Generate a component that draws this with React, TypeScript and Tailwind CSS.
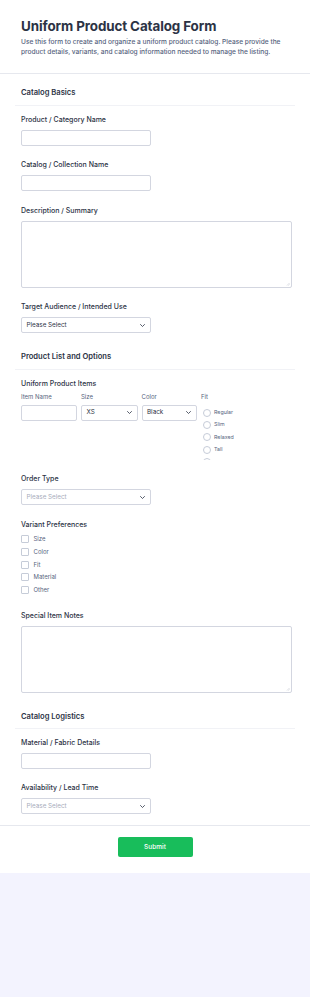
import { ReactNode } from 'react';

function Chevron() {
    return (
        <svg width="5" height="3" viewBox="0 0 10 6" className="shrink-0">
            <path d="M1 1l4 4 4-4" fill="none" stroke="#2c3345" strokeWidth="1.6" strokeLinecap="round" strokeLinejoin="round" />
        </svg>
    );
}

function Label({ children }: { children: ReactNode }) {
    return <div className="h-[10px] text-[7px] leading-[10px] font-medium text-[#2c3345]">{children}</div>;
}

function TextInput({ className = 'w-[130px]' }: { className?: string }) {
    return <div className={`h-[16px] rounded-[2px] border border-[#d3d6e0] bg-white ${className}`}></div>;
}

function Select({ value, placeholder = false, className = 'w-[130px]' }: { value: string; placeholder?: boolean; className?: string }) {
    return (
        <div className={`h-[16px] rounded-[2px] border border-[#d3d6e0] bg-white flex items-center justify-between pl-[4.5px] pr-[5px] ${className}`}>
            <span className={`text-[6.3px] leading-none ${placeholder ? 'text-[#a7adbb]' : 'text-[#2c3345]'}`}>{value}</span>
            <Chevron />
        </div>
    );
}

function TextArea({ height }: { height: string }) {
    return (
        <div className={`relative w-full rounded-[2px] border border-[#d3d6e0] bg-white ${height}`}>
            <svg width="4" height="4" viewBox="0 0 8 8" className="absolute right-[1px] bottom-[1px]">
                <path d="M7 2L2 7M7 5L5 7" stroke="#b5bac6" strokeWidth="1" />
            </svg>
        </div>
    );
}

function SectionHeader({ title }: { title: string }) {
    return (
        <div className="border-b border-[#f1f2f6] pb-[6.5px] px-[6px]">
            <div className="h-[10px] text-[7.6px] leading-[10px] font-semibold text-[#2c3345]">{title}</div>
        </div>
    );
}

const fits = ['Regular', 'Slim', 'Relaxed', 'Tall'];
const variants = ['Size', 'Color', 'Fit', 'Material', 'Other'];

export default function App() {
    return (
        <div className="min-h-screen bg-[#f3f3fe]" style={{ fontFamily: 'Inter, "Noto Sans", sans-serif' }}>
            <div className="bg-white pb-[16px]">
                {/* header */}
                <div className="px-[21px] pt-[18px] pb-[16.5px] border-b border-[#e6e8ee]">
                    <h1 className="text-[13.4px] leading-[16px] font-bold text-[#2c3345] tracking-[-0.1px]">Uniform Product Catalog Form</h1>
                    <p className="mt-[2.5px] text-[6.6px] leading-[10px] text-[#57647e] font-medium">
                        Use this form to create and organize a uniform product catalog. Please provide the
                        <br />
                        product details, variants, and catalog information needed to manage the listing.
                    </p>
                </div>

                <div className="px-[15px]">
                    {/* Catalog Basics */}
                    <div className="pt-[14px]">
                        <SectionHeader title="Catalog Basics" />
                        <div className="pl-[6px] pr-[3px] pt-[9px] flex flex-col gap-[14.5px]">
                            <div className="flex flex-col gap-[5px]">
                                <Label>Product / Category Name</Label>
                                <TextInput />
                            </div>
                            <div className="flex flex-col gap-[5px]">
                                <Label>Catalog / Collection Name</Label>
                                <TextInput />
                            </div>
                            <div className="flex flex-col gap-[5px]">
                                <Label>Description / Summary</Label>
                                <TextArea height="h-[67px]" />
                            </div>
                            <div className="flex flex-col gap-[5px]">
                                <Label>Target Audience / Intended Use</Label>
                                <Select value="Please Select" />
                            </div>
                        </div>
                    </div>

                    {/* Product List and Options */}
                    <div className="pt-[19px]">
                        <SectionHeader title="Product List and Options" />
                        <div className="pl-[6px] pr-[3px] pt-[9px] flex flex-col gap-[14.5px]">
                            <div>
                                <Label>Uniform Product Items</Label>
                                <div className="mt-[3px] grid grid-cols-[56px_56.5px_55.5px_1fr] gap-x-[4px]">
                                    <div className="h-[10px] text-[6px] leading-[10px] text-[#57647e]">Item Name</div>
                                    <div className="h-[10px] text-[6px] leading-[10px] text-[#57647e]">Size</div>
                                    <div className="h-[10px] text-[6px] leading-[10px] text-[#57647e]">Color</div>
                                    <div className="h-[10px] text-[6px] leading-[10px] text-[#57647e]">Fit</div>
                                    <div className="mt-[3px]">
                                        <TextInput className="w-full" />
                                    </div>
                                    <div className="mt-[3px]">
                                        <Select value="XS" className="w-full" />
                                    </div>
                                    <div className="mt-[3px]">
                                        <Select value="Black" className="w-full" />
                                    </div>
                                    <div className="mt-[3px] h-[55px] overflow-hidden pt-[4px] flex flex-col gap-[4.4px]">
                                        {fits.map((f) => (
                                            <div key={f} className="h-[8px] flex items-center gap-[3.5px] shrink-0">
                                                <span className="ml-[1.5px] w-[8px] h-[8px] rounded-full border border-[#c6ccd8] bg-white shrink-0"></span>
                                                <span className="text-[5.3px] leading-none text-[#57647e]">{f}</span>
                                            </div>
                                        ))}
                                        <div className="h-[8px] flex items-center shrink-0">
                                            <span className="ml-[1.5px] w-[8px] h-[8px] rounded-full border border-[#c6ccd8] bg-white shrink-0"></span>
                                        </div>
                                    </div>
                                </div>
                            </div>
                            <div className="flex flex-col gap-[5px]">
                                <Label>Order Type</Label>
                                <Select value="Please Select" placeholder />
                            </div>
                            <div>
                                <Label>Variant Preferences</Label>
                                <div className="mt-[3.3px] flex flex-col">
                                    {variants.map((v) => (
                                        <div key={v} className="h-[12.75px] flex items-center gap-[4.5px]">
                                            <span className="w-[8px] h-[8px] rounded-[1px] border border-[#c6ccd8] bg-white shrink-0"></span>
                                            <span className="text-[6px] leading-none text-[#57647e]">{v}</span>
                                        </div>
                                    ))}
                                </div>
                            </div>
                            <div className="flex flex-col gap-[4.7px]">
                                <Label>Special Item Notes</Label>
                                <TextArea height="h-[67px]" />
                            </div>
                        </div>
                    </div>

                    {/* Catalog Logistics */}
                    <div className="pt-[19px]">
                        <SectionHeader title="Catalog Logistics" />
                        <div className="pl-[6px] pr-[3px] pt-[8.5px] flex flex-col gap-[14.5px]">
                            <div className="flex flex-col gap-[5px]">
                                <Label>Material / Fabric Details</Label>
                                <TextInput />
                            </div>
                            <div className="flex flex-col gap-[5px]">
                                <Label>Availability / Lead Time</Label>
                                <Select value="Please Select" placeholder />
                            </div>
                        </div>
                    </div>
                </div>

                {/* submit */}
                <div className="mt-[10.5px] border-t border-[#e6e8ee] pt-[11.5px] flex justify-center">
                    <button className="w-[75px] h-[19.5px] rounded-[2px] bg-[#18bd5b] text-white text-[6.5px] font-medium leading-none">
                        Submit
                    </button>
                </div>
            </div>
        </div>
    );
}
